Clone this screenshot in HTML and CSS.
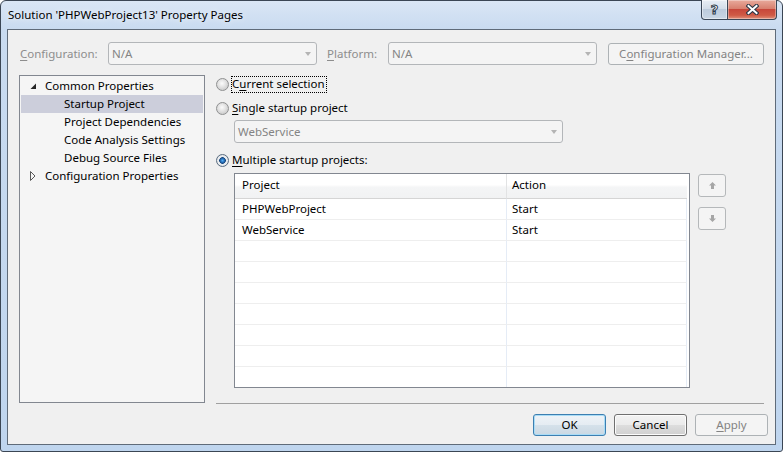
FILE: index.html
```html
<!DOCTYPE html>
<html>
<head>
<meta charset="utf-8">
<title>Property Pages</title>
<link rel="stylesheet" href="styles.css">
</head>
<body>
<div class="window">
  <div class="titlebar">
    <span class="title">Solution 'PHPWebProject13' Property Pages</span>
    <div class="caption">
      <div class="cap help"><span class="qmark">?</span></div>
      <div class="cap close">
        <svg width="13" height="11" viewBox="0 0 13 11"><path d="M2.5 2 L10.5 9 M10.5 2 L2.5 9" stroke="#2b3544" stroke-width="4.2" stroke-linecap="square"/><path d="M2.5 2 L10.5 9 M10.5 2 L2.5 9" stroke="#ffffff" stroke-width="2" stroke-linecap="square"/></svg>
      </div>
    </div>
  </div>
  <div class="client">
    <div class="toprow">
      <span class="lbl cfg-lbl"><u>C</u>onfiguration:</span>
      <div class="combo disabled w-top"><span class="ctext">N/A</span><span class="arrow"></span></div>
      <span class="lbl plat-lbl"><u>P</u>latform:</span>
      <div class="combo disabled w-top"><span class="ctext">N/A</span><span class="arrow"></span></div>
      <div class="btn disabled cfgmgr">C<u>o</u>nfiguration Manager...</div>
    </div>
    <div class="main">
      <div class="tree">
        <div class="node top"><span class="exp"><svg width="7" height="7" viewBox="0 0 7 7"><path d="M6 0.5 V6 H0.5 Z" fill="#262626"/></svg></span>Common Properties</div>
        <div class="node child selected">Startup Project</div>
        <div class="node child">Project Dependencies</div>
        <div class="node child">Code Analysis Settings</div>
        <div class="node child">Debug Source Files</div>
        <div class="node top"><span class="exp"><svg width="6" height="10" viewBox="0 0 6 10"><path d="M0.5 0.5 L5 5 L0.5 9.5 Z" fill="none" stroke="#595959" stroke-width="1"/></svg></span>Configuration Properties</div>
      </div>
      <div class="page">
        <div class="radio-row first"><span class="radio"></span><span class="rlabel focus">C<u>u</u>rrent selection</span></div>
        <div class="radio-row second"><span class="radio"></span><span class="rlabel"><u>S</u>ingle startup project</span></div>
        <div class="combo disabled w-single"><span class="ctext">WebService</span><span class="arrow"></span></div>
        <div class="radio-row third"><span class="radio checked"></span><span class="rlabel"><u>M</u>ultiple startup projects:</span></div>
        <div class="grid-area">
          <div class="grid">
            <div class="grow head"><div class="c1">Project</div><div class="c2">Action</div></div>
            <div class="grow"><div class="c1">PHPWebProject</div><div class="c2">Start</div></div>
            <div class="grow"><div class="c1">WebService</div><div class="c2">Start</div></div>
            <div class="grow"><div class="c1"></div><div class="c2"></div></div>
            <div class="grow"><div class="c1"></div><div class="c2"></div></div>
            <div class="grow"><div class="c1"></div><div class="c2"></div></div>
            <div class="grow"><div class="c1"></div><div class="c2"></div></div>
            <div class="grow"><div class="c1"></div><div class="c2"></div></div>
            <div class="grow"><div class="c1"></div><div class="c2"></div></div>
            <div class="grow"><div class="c1"></div><div class="c2"></div></div>
          </div>
          <div class="mover">
            <div class="mbtn"><svg width="7" height="7" viewBox="0 0 7 7"><path d="M3.5 0 L7 3.5 H5 V7 H2 V3.5 H0 Z" fill="#a6a6a6"/></svg></div>
            <div class="mbtn"><svg width="7" height="7" viewBox="0 0 7 7"><path d="M3.5 7 L7 3.5 H5 V0 H2 V3.5 H0 Z" fill="#a6a6a6"/></svg></div>
          </div>
        </div>
      </div>
    </div>
    <div class="footer">
      <div class="btn default">OK</div>
      <div class="btn">Cancel</div>
      <div class="btn disabled"><u>A</u>pply</div>
    </div>
  </div>
</div>
</body>
</html>
```

FILE: styles.css
```css
* { box-sizing: border-box; }
html, body { margin: 0; padding: 0; }
body {
  width: 783px;
  height: 452px;
  overflow: hidden;
  background: #ffffff;
  font-family: "Noto Sans", "Open Sans", sans-serif;
  font-size: 11.5px;
  color: #000;
}
u { text-decoration: underline; text-underline-offset: 2px; }

.window {
  width: 783px;
  height: 452px;
  border: 1px solid #3b4654;
  border-radius: 6px 6px 3px 3px;
  background: linear-gradient(to bottom, #dae6f5 0px, #c9dbf0 28px, #bfd5ee 100%);
  padding: 0 6px 6px;
  display: flex;
  flex-direction: column;
}
.titlebar {
  height: 28px;
  display: flex;
  align-items: flex-start;
}
.title {
  padding-left: 1px;
  line-height: 27px;
  font-size: 11.5px;
  color: #000;
  text-shadow: 0 0 6px rgba(255,255,255,0.9);
}
.caption {
  margin-left: auto;
  margin-top: -1px;
  margin-right: -1px;
  display: flex;
}
.cap {
  height: 20px;
  border: 1px solid #3a4757;
  border-top: none;
  display: flex;
  align-items: center;
  justify-content: center;
}
.cap.help {
  width: 27px;
  border-radius: 0 0 0 4px;
  background: linear-gradient(to bottom, #e8eef5 0%, #d3dde9 45%, #bccbdc 50%, #c9d6e4 100%);
  box-shadow: inset 0 0 0 1px rgba(255,255,255,0.45);
}
.qmark {
  font-family: "DejaVu Sans", sans-serif;
  font-weight: bold;
  font-size: 13px;
  line-height: 13px;
  color: #ffffff;
  -webkit-text-stroke: 1px #2d3a4a;
  margin-top: -1px;
}
.cap.close {
  width: 49px;
  border-left: none;
  border-radius: 0 0 4px 0;
  background: linear-gradient(to bottom, #e8aa9c 0%, #d8806f 45%, #c7473a 50%, #cf5a45 80%, #e0907a 100%);
  box-shadow: inset 0 0 0 1px rgba(255,255,255,0.35);
}

.client {
  flex: 1;
  border: 1px solid #5f6b79;
  background: #f0f0f0;
  display: flex;
  flex-direction: column;
}

.toprow {
  display: flex;
  align-items: center;
  padding: 12px 0 0 12px;
  height: 35px;
}
.lbl { color: #8d8d8d; white-space: nowrap; padding-bottom: 1px; }
.cfg-lbl { width: 88px; }
.plat-lbl { width: 61px; margin-left: 10px; }

.combo {
  height: 23px;
  border: 1px solid #b3b6b9;
  border-radius: 3px;
  background: #f4f4f4;
  display: flex;
  align-items: center;
  padding: 0 5px 1px 3px;
}
.combo .ctext { flex: 1; color: #848484; }
.arrow {
  width: 0;
  height: 0;
  margin-top: 1px;
  border-left: 3.5px solid transparent;
  border-right: 3.5px solid transparent;
  border-top: 4px solid #b4b4b4;
}
.w-top { width: 209px; }
.w-single { width: 329px; margin: 3px 0 0 18px; }

.btn {
  width: 73px;
  height: 22px;
  border: 1px solid #707070;
  border-radius: 3px;
  background: linear-gradient(to bottom, #f3f3f3 0%, #ebebeb 50%, #dddddd 51%, #d0d0d0 100%);
  box-shadow: inset 0 0 0 1px #fcfcfc;
  display: flex;
  align-items: center;
  justify-content: center;
  padding-bottom: 1px;
  color: #000;
  white-space: nowrap;
}
.btn.default {
  border-color: #3c7fb1;
  background: linear-gradient(to bottom, #eef3f7 0%, #e5ecf2 50%, #d5e1ea 51%, #cad8e3 100%);
  box-shadow: inset 0 0 0 1px #a9dcf6;
}
.btn.disabled {
  border-color: #adb2b5;
  background: #f4f4f4;
  box-shadow: none;
  color: #838383;
}
.cfgmgr { width: 156px; margin-left: 11px; }

.main {
  display: flex;
  margin-top: 10px;
  height: 329px;
}
.tree {
  margin-left: 11px;
  width: 186px;
  height: 328px;
  border: 1px solid #828790;
  background: #f5f5f5;
  padding: 1px;
}
.node {
  height: 18px;
  display: flex;
  align-items: center;
  padding-bottom: 1px;
  white-space: nowrap;
}
.node.top { padding-left: 0; }
.node.child { padding-left: 43px; }
.node.selected { background: #cccedb; }
.exp {
  width: 24px;
  height: 18px;
  display: flex;
  align-items: center;
  padding-left: 9px;
  padding-top: 1px;
}

.page {
  margin-left: 11px;
  width: 548px;
  height: 329px;
  border-bottom: 1px solid #a0a0a0;
  display: flex;
  flex-direction: column;
  align-items: flex-start;
}
.radio-row {
  height: 17px;
  display: flex;
  align-items: center;
}
.radio-row.first { margin-top: 1px; }
.radio-row.second { margin-top: 7px; }
.radio-row.third { margin-top: 9px; }
.radio {
  width: 13px;
  height: 13px;
  border-radius: 50%;
  border: 1px solid #8f9091;
  background: radial-gradient(circle at 45% 40%, #fbfbfb 0, #e8e8e8 3px, #d2d2d2 6px);
  margin-right: 2px;
}
.radio.checked {
  border-color: #5b6d80;
  background: radial-gradient(circle at 50% 50%, #58aef0 0, #2d7cc8 1.5px, #17467e 3px, #dde3e8 3.6px, #f1f3f5 4.6px, #cfd4d9 6px);
}
.rlabel {
  border: 1px solid transparent;
  padding: 0 1px 1px 0;
  line-height: 14px;
  height: 17px;
  white-space: nowrap;
}
.rlabel.focus { border: 1px dotted #000; }

.grid-area {
  display: flex;
  margin: 4px 0 0 18px;
}
.grid {
  width: 456px;
  height: 215px;
  border: 1px solid #828790;
  background: #fff;
  overflow: hidden;
}
.grow {
  display: flex;
  height: 21px;
}
.grow .c1 {
  width: 272px;
  border-right: 1px solid #e5ecf6;
  border-bottom: 1px solid #eeeeee;
  padding-left: 7px;
  line-height: 19px;
}
.grow .c2 {
  width: 180px;
  border-right: 1px solid #e5ecf6;
  border-bottom: 1px solid #eeeeee;
  padding-left: 5px;
  line-height: 19px;
}
.grow.head { height: 25px; }
.grow.head .c1, .grow.head .c2 {
  line-height: 22px;
  background: linear-gradient(to bottom, #ffffff 0%, #ffffff 45%, #f4f5f6 55%, #f1f2f3 100%);
  border-bottom: 1px solid #d5d5d5;
  border-right: 1px solid #e2e3e4;
}
.grow.head .c2 { border-right: none; }

.mover {
  margin-left: 8px;
  margin-top: 1px;
  display: flex;
  flex-direction: column;
  gap: 10px;
}
.mbtn {
  width: 28px;
  height: 23px;
  border: 1px solid #b5b8ba;
  border-radius: 3px;
  background: #f4f4f4;
  display: flex;
  align-items: center;
  justify-content: center;
}

.footer {
  display: flex;
  justify-content: flex-end;
  gap: 8px;
  margin-top: 10px;
  padding-right: 7px;
}
```
